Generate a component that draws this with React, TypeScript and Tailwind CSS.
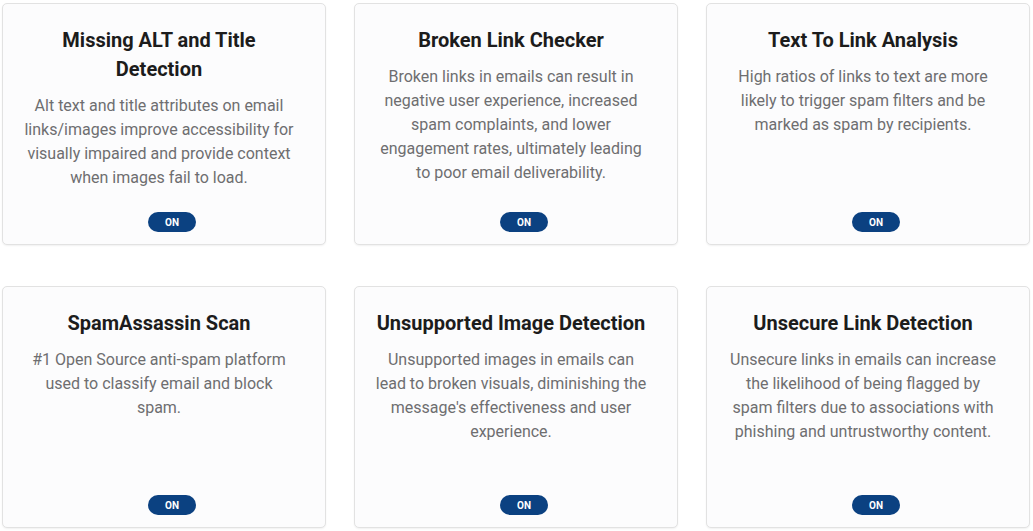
const checks = [
  {
    title: "Missing ALT and Title Detection",
    text: "Alt text and title attributes on email links/images improve accessibility for visually impaired and provide context when images fail to load.",
  },
  {
    title: "Broken Link Checker",
    text: "Broken links in emails can result in negative user experience, increased spam complaints, and lower engagement rates, ultimately leading to poor email deliverability.",
  },
  {
    title: "Text To Link Analysis",
    text: "High ratios of links to text are more likely to trigger spam filters and be marked as spam by recipients.",
  },
  {
    title: "SpamAssassin Scan",
    text: "#1 Open Source anti-spam platform used to classify email and block spam.",
  },
  {
    title: "Unsupported Image Detection",
    text: "Unsupported images in emails can lead to broken visuals, diminishing the message's effectiveness and user experience.",
  },
  {
    title: "Unsecure Link Detection",
    text: "Unsecure links in emails can increase the likelihood of being flagged by spam filters due to associations with phishing and untrustworthy content.",
  },
];

const App = () => {
  return (
    <div
      className="min-h-[531px] bg-white pl-[2px] pt-[3px]"
      style={{ fontFamily: "Roboto, 'Liberation Sans', sans-serif" }}
    >
      <div className="grid w-[1028px] grid-cols-3 gap-x-[28px] gap-y-[41px]">
        {checks.map((item, index) => (
          <div
            key={index}
            className="flex h-[242px] flex-col items-center rounded-[5px] border border-[#e2e2e2] bg-[#fcfcfd] pb-[12px] pl-[20px] pr-[30px] pt-[22px] text-center shadow-[0_1px_2px_rgba(0,0,0,0.06)]"
          >
            <h3 className="text-[20px] font-bold leading-[29px] text-[#1c1c1c]">
              {item.title}
            </h3>
            <p className="mt-[10px] text-[16px] leading-[24px] text-[#6e6e70]">
              {item.text}
            </p>
            <button className="ml-[26px] mt-auto flex h-[20px] w-[48px] items-center justify-center rounded-full bg-[#0b4181] text-[10px] font-bold text-white">
              ON
            </button>
          </div>
        ))}
      </div>
    </div>
  );
};

export default App;
